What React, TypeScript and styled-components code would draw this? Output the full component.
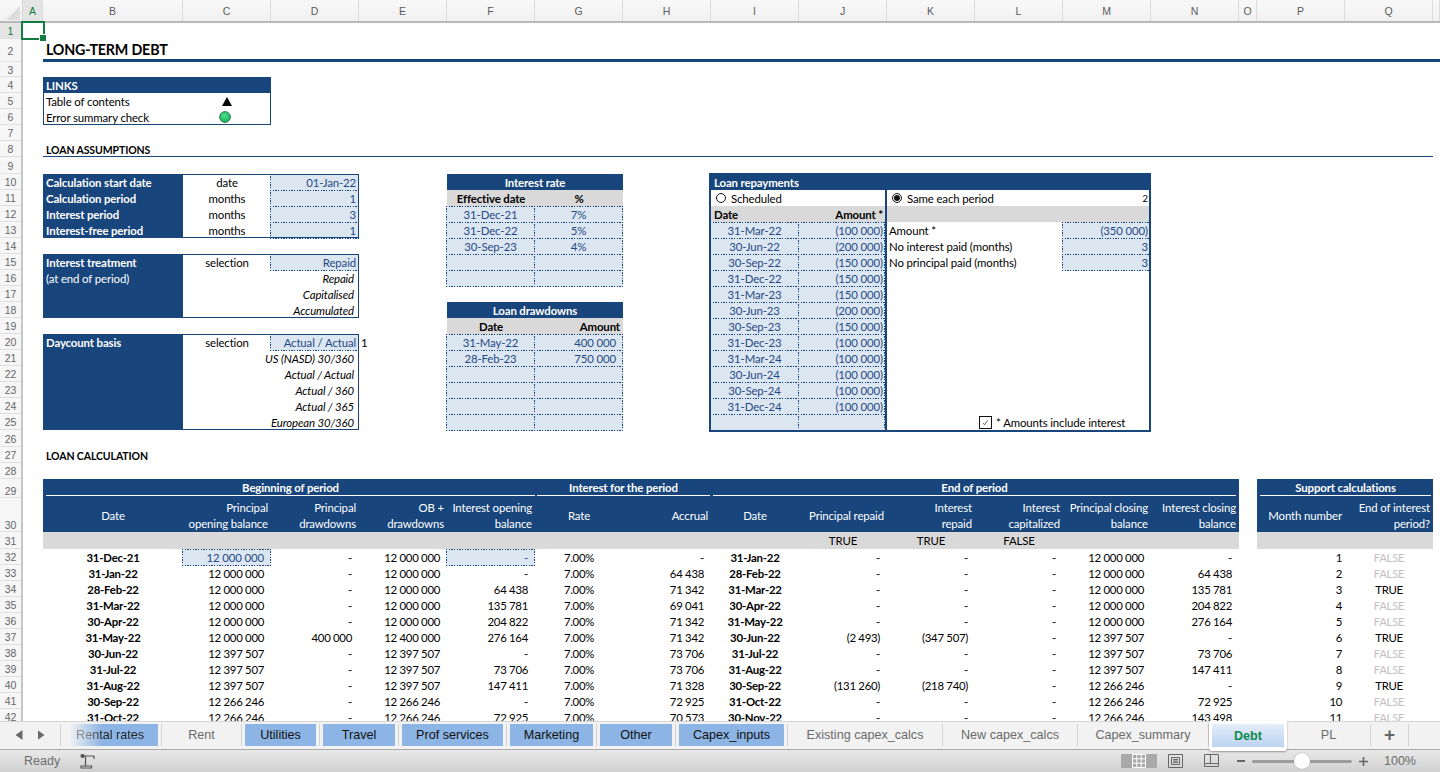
import React from "react";
import styled, { createGlobalStyle, css } from "styled-components";

const NAVY = "#17457c";
const INPUT_BG = "#dce6f1";
const INPUT_TEXT = "#1f4a85";
const GREY = "#d9d9d9";
const CALIBRI = `Lato, "Liberation Sans", sans-serif`;
const UI = `"Liberation Sans", Arial, sans-serif`;

const COLUMN_LETTERS = "ABCDEFGHIJKLMNOPQR".split("");
const COLUMNS = "20px 140px repeat(12, 88px) 18px 88px 88px 1fr";
const ROW_HEIGHTS = [16, 23, 15, 16, 16, 16, 16, 16, 17, ...Array(16).fill(16), 17, 16, 16, 19, 34, 17, ...Array(11).fill(16)];
const ROWS = ROW_HEIGHTS.map((h) => `${h}px`).join(" ");

const GlobalStyle = createGlobalStyle`
  html, body {
    margin: 0;
    padding: 0;
    background: #ffffff;
  }

  * {
    box-sizing: border-box;
  }
`;

const Window = styled.div`
  position: relative;
  display: flex;
  flex-direction: column;
  width: 1440px;
  height: 772px;
  overflow: hidden;
  font-family: ${CALIBRI};
  font-size: 11.4px;
  letter-spacing: -0.12px;
  color: #000000;
`;

const ColumnBar = styled.div`
  display: grid;
  grid-template-columns: 23px ${COLUMNS};
  flex: 0 0 23px;
  background: linear-gradient(#f8f8f8, #f1f1f1);
  border-bottom: 2px solid #b9b9b9;
`;

const Corner = styled.div`
  display: flex;
  align-items: flex-end;
  justify-content: flex-end;
  padding: 0 2px 1px 0;
  border-right: 1px solid #d6d6d6;
`;

const CornerMark = styled.div`
  width: 14px;
  height: 14px;
  background: #dddddd;
  clip-path: polygon(100% 0, 100% 100%, 0 100%);
`;

const ColumnLetter = styled.div<{ $active?: boolean }>`
  display: flex;
  align-items: center;
  justify-content: center;
  border-right: 1px solid #dcdcdc;
  font-family: ${UI};
  font-size: 10.5px;
  letter-spacing: 0;
  color: ${(p) => (p.$active ? "#107c41" : "#5c5c5c")};
  background: ${(p) => (p.$active ? "#e4e4e4" : "transparent")};
`;

const SheetArea = styled.div`
  display: flex;
  flex: 1;
  min-height: 0;
  overflow: hidden;
`;

const RowBar = styled.div`
  display: grid;
  grid-template-rows: ${ROWS};
  flex: 0 0 23px;
  align-self: flex-start;
  background: #f6f6f6;
  border-right: 2px solid #c6c6c6;
`;

const RowNumber = styled.div<{ $active?: boolean; $low?: boolean }>`
  display: flex;
  align-items: ${(p) => (p.$low ? "flex-end" : "center")};
  justify-content: center;
  padding: ${(p) => (p.$low ? "0 0 0" : "1px 0 0")};
  border-bottom: 1px solid #e0e0e0;
  font-family: ${UI};
  font-size: 10.5px;
  letter-spacing: 0;
  color: ${(p) => (p.$active ? "#107c41" : "#666666")};
  background: ${(p) => (p.$active ? "#e4e4e4" : "transparent")};
`;

const Sheet = styled.main`
  display: grid;
  flex: 1;
  align-self: flex-start;
  grid-template-columns: ${COLUMNS};
  grid-template-rows: ${ROWS};
`;

// lies over the headers and cell A1, like the real selection handle
const Selection = styled.div`
  position: absolute;
  left: 21px;
  top: 21px;
  width: 24px;
  height: 19px;
  border: 2px solid #107c41;

  &::after {
    content: "";
    position: absolute;
    right: -4px;
    bottom: -4px;
    width: 6px;
    height: 6px;
    background: #107c41;
    border: 1px solid #ffffff;
  }
`;

const PageTitle = styled.h1`
  grid-column: 2 / -1;
  grid-row: 2;
  display: flex;
  align-items: center;
  margin: 0;
  padding: 0 0 0 3px;
  border-bottom: 3px solid ${NAVY};
  font-size: 14.3px;
  font-weight: 700;
  letter-spacing: -0.2px;
`;

const SectionTitle = styled.h2<{ $row: number; $rule?: boolean }>`
  grid-column: 2 / 18;
  grid-row: ${(p) => p.$row};
  display: flex;
  align-items: center;
  margin: 0;
  padding: ${(p) => (p.$rule ? 2 : 1)}px 0 0 3px;
  font-size: 10.5px;
  font-weight: 700;
  letter-spacing: -0.1px;
  border-bottom: ${(p) => (p.$rule ? `1px solid ${NAVY}` : "none")};
`;

const Block = styled.section<{ $col: string; $row: string; $frame?: boolean; $thick?: boolean }>`
  position: relative;
  grid-column: ${(p) => p.$col};
  grid-row: ${(p) => p.$row};
  display: grid;
  grid-template-columns: subgrid;
  grid-template-rows: subgrid;
  ${(p) =>
    p.$frame &&
    css`
      outline: 1px solid ${NAVY};
      outline-offset: -1px;
    `}
  ${(p) =>
    p.$thick &&
    css`
      &::after {
        content: "";
        position: absolute;
        inset: -1px 0 -2px -2px;
        border: 2px solid ${NAVY};
        pointer-events: none;
      }
    `}
`;

const cellBase = css`
  display: flex;
  align-items: center;
  min-width: 0;
  white-space: nowrap;
`;

const spanCss = css<{ $span?: number; $rows?: number }>`
  grid-column: span ${(p) => p.$span ?? 1};
  grid-row: span ${(p) => p.$rows ?? 1};
`;

type Align = "left" | "center" | "right";
const justify = { left: "flex-start", center: "center", right: "flex-end" };

const NavyCell = styled.div<{ $span?: number; $rows?: number; $align?: Align }>`
  ${cellBase}
  ${spanCss}
  justify-content: ${(p) => justify[p.$align ?? "left"]};
  padding: 0 3px;
  background: ${NAVY};
  color: #ffffff;
  font-weight: 700;
`;

const NavyStack = styled(NavyCell)`
  flex-direction: column;
  align-items: flex-start;
  justify-content: flex-start;
  padding-top: 1px;
`;

const StackLine = styled.div<{ $regular?: boolean }>`
  height: 16px;
  line-height: 16px;
  font-weight: ${(p) => (p.$regular ? 400 : 700)};
`;

const PlainCell = styled.div<{ $span?: number; $rows?: number; $align?: Align; $pad?: number }>`
  ${cellBase}
  ${spanCss}
  justify-content: ${(p) => justify[p.$align ?? "left"]};
  padding: 0 ${(p) => p.$pad ?? 3}px;
`;

const OptionCell = styled(PlainCell)`
  justify-content: flex-end;
  padding-right: 5px;
  font-style: italic;
`;

const FloatingNote = styled.div`
  ${cellBase}
  grid-column: 5;
  grid-row: 20;
  padding-left: 2px;
`;

const GreyCell = styled.div<{ $span?: number; $align?: Align; $pad?: number; $bold?: boolean }>`
  ${cellBase}
  ${spanCss}
  justify-content: ${(p) => justify[p.$align ?? "left"]};
  padding: 0 ${(p) => p.$pad ?? 3}px;
  background: ${GREY};
  font-weight: ${(p) => (p.$bold === false ? 400 : 700)};
`;

const InputCell = styled.div<{ $align?: Align; $pad?: number }>`
  ${cellBase}
  justify-content: ${(p) => justify[p.$align ?? "right"]};
  padding: 0 ${(p) => p.$pad ?? 3}px;
  margin: 0 0 -1px -1px;
  color: ${INPUT_TEXT};
  background-color: ${INPUT_BG};
  background-image: repeating-linear-gradient(90deg, ${NAVY} 0 1.4px, transparent 1.4px 2.67px),
    repeating-linear-gradient(90deg, ${NAVY} 0 1.4px, transparent 1.4px 2.67px),
    repeating-linear-gradient(0deg, ${NAVY} 0 1.4px, transparent 1.4px 2.67px),
    repeating-linear-gradient(0deg, ${NAVY} 0 1.4px, transparent 1.4px 2.67px);
  background-size: 100% 1px, 100% 1px, 1px 100%, 1px 100%;
  background-position: top, bottom, left, right;
  background-repeat: no-repeat;
`;

const Pane = styled.div<{ $col: string; $divider?: boolean }>`
  grid-column: ${(p) => p.$col};
  grid-row: 2 / -1;
  display: grid;
  grid-template-columns: subgrid;
  grid-template-rows: subgrid;
  border-right: ${(p) => (p.$divider ? `2px solid ${NAVY}` : "none")};
`;

const RadioRow = styled(PlainCell)`
  gap: 5px;
  padding-left: 5px;
`;

const Radio = styled.span<{ $on?: boolean }>`
  position: relative;
  flex: 0 0 10px;
  width: 10px;
  height: 10px;
  border: 1px solid #111111;
  border-radius: 50%;
  background: #ffffff;

  &::after {
    content: "";
    display: ${(p) => (p.$on ? "block" : "none")};
    position: absolute;
    inset: 1px;
    border-radius: 50%;
    background: #111111;
  }
`;

const RadioValue = styled.span`
  margin-left: auto;
  font-size: 9.5px;
  letter-spacing: 0;
`;

const CheckNote = styled(PlainCell)`
  gap: 4px;
  padding-left: 92px;
`;

const CheckBox = styled.span`
  display: flex;
  align-items: center;
  justify-content: center;
  flex: 0 0 13px;
  width: 13px;
  height: 13px;
  border: 1px solid #111111;
  background: #ffffff;
`;

const GroupCell = styled(NavyCell)<{ $left: number; $right: number }>`
  align-items: flex-start;
  padding: 0 ${(p) => p.$right}px 0 ${(p) => p.$left}px;
  justify-content: stretch;
`;

const GroupText = styled.div`
  flex: 1;
  height: 17px;
  line-height: 17px;
  text-align: center;
  border-bottom: 1px solid #ffffff;
`;

const ColumnHead = styled.div<{ $align?: Align }>`
  ${cellBase}
  justify-content: ${(p) => justify[p.$align ?? "right"]};
  padding: 2px 3px 0;
  background: ${NAVY};
  color: #ffffff;
  line-height: 16px;
  text-align: ${(p) => p.$align ?? "right"};
  white-space: pre-line;
`;

const DataCell = styled.div<{ $align?: Align; $bold?: boolean; $muted?: boolean; $pad?: number }>`
  ${cellBase}
  justify-content: ${(p) => justify[p.$align ?? "right"]};
  padding: 0 ${(p) => p.$pad ?? (p.$align === "center" ? 0 : 7)}px;
  font-weight: ${(p) => (p.$bold ? 700 : 400)};
  letter-spacing: ${(p) => (p.$bold ? -0.22 : -0.3)}px;
  color: ${(p) => (p.$muted ? "#bfbfbf" : "#000000")};
`;

const TabBar = styled.div`
  position: relative;
  display: flex;
  align-items: stretch;
  flex: 0 0 27px;
  background: #f2f2f2;
  border-top: 1px solid #d4d4d4;
  border-bottom: 1px solid #a9a9a9;
  font-family: ${UI};
  font-size: 12.6px;
  letter-spacing: 0;
`;

const TabNav = styled.div`
  display: flex;
  align-items: center;
  justify-content: center;
  gap: 15px;
  flex: 0 0 61px;
  border-right: 1px solid #d2d2d2;
  margin: 2px 0 3px;
`;

const NavArrow = styled.span<{ $left?: boolean }>`
  width: 7px;
  height: 10px;
  background: #6b6b6b;
  clip-path: ${(p) => (p.$left ? "polygon(100% 0, 100% 100%, 0 50%)" : "polygon(0 0, 100% 50%, 0 100%)")};
`;

const Tab = styled.div<{ $w: number; $kind: "plain" | "blue" | "fade" | "active" }>`
  display: flex;
  align-items: center;
  justify-content: center;
  flex: 0 0 ${(p) => p.$w}px;
  margin: 2px 0 3px;
  border-right: 1px solid #d2d2d2;
  color: #6a6a6a;
  ${(p) =>
    p.$kind === "blue" &&
    css`
      color: #111111;
      background: #8cb4e4;
      background-clip: content-box;
      padding: 0 3px;
    `}
  ${(p) =>
    p.$kind === "fade" &&
    css`
      color: #222222;
      padding: 0 3px 0 1px;
      background: linear-gradient(90deg, #f2f2f2 8%, #8cb4e4 42%) content-box;
    `}
  ${(p) =>
    p.$kind === "active" &&
    css`
      margin: -1px 0 -2px;
      padding: 3px 3px 4px;
      border: none;
      border-radius: 0 0 3px 3px;
      background: linear-gradient(#e4edf9, #bcd3f0) content-box, #ffffff;
      box-shadow: 0 1px 2px rgba(0, 0, 0, 0.35);
      color: #0f8a50;
      font-weight: 700;
      z-index: 1;
    `}
`;

const FadeLabel = styled.span`
  background: linear-gradient(90deg, #8a8a8a 10px, #222222 26px);
  -webkit-background-clip: text;
  background-clip: text;
  color: transparent;
`;

const PlusLabel = styled.span`
  font-size: 19px;
  font-weight: 700;
  color: #666666;
`;

const StatusBar = styled.footer`
  display: flex;
  align-items: center;
  flex: 0 0 22px;
  padding-left: 24px;
  background: linear-gradient(#e9e9e9, #d0d0d0);
  font-family: ${UI};
  font-size: 12.5px;
  letter-spacing: 0;
  color: #6e6e6e;
`;

const MacroIcon = styled.svg`
  margin-left: 20px;
`;

const StatusRight = styled.div`
  display: flex;
  align-items: center;
  align-self: stretch;
  margin-left: auto;
`;

const ViewButton = styled.div<{ $on?: boolean }>`
  display: flex;
  align-items: center;
  justify-content: center;
  width: 36px;
  background: ${(p) => (p.$on ? "#a9a9a9" : "transparent")};
`;

const ZoomSign = styled.svg<{ $gap?: number }>`
  flex: 0 0 auto;
  margin-left: ${(p) => p.$gap ?? 0}px;
`;

const SliderTrack = styled.div`
  position: relative;
  width: 100px;
  height: 3px;
  margin: 0 7px;
  border-radius: 2px;
  background: #9d9d9d;
`;

const SliderThumb = styled.div`
  position: absolute;
  left: 42px;
  top: -7px;
  width: 16px;
  height: 16px;
  border-radius: 50%;
  background: #ffffff;
  box-shadow: 0 0 1px rgba(0, 0, 0, 0.5);
`;

const ZoomLabel = styled.span`
  width: 72px;
  padding-left: 16px;
`;

const LedIcon = styled.svg`
  margin-right: 4px;
`;

const TABS: { label: string; w: number; kind: "plain" | "blue" | "fade" | "active" }[] = [
  { label: "Rental rates", w: 101, kind: "fade" },
  { label: "Rent", w: 80, kind: "plain" },
  { label: "Utilities", w: 78, kind: "blue" },
  { label: "Travel", w: 79, kind: "blue" },
  { label: "Prof services", w: 108, kind: "blue" },
  { label: "Marketing", w: 90, kind: "blue" },
  { label: "Other", w: 79, kind: "blue" },
  { label: "Capex_inputs", w: 112, kind: "blue" },
  { label: "Existing capex_calcs", w: 155, kind: "plain" },
  { label: "New capex_calcs", w: 135, kind: "plain" },
  { label: "Capex_summary", w: 131, kind: "plain" },
  { label: "Debt", w: 78, kind: "active" },
  { label: "PL", w: 84, kind: "plain" },
];

const DRAWDOWNS = [["31-May-22", "400 000"], ["28-Feb-23", "750 000"], ["", ""], ["", ""], ["", ""], ["", ""]];
const RATES = [["31-Dec-21", "7%"], ["31-Dec-22", "5%"], ["30-Sep-23", "4%"], ["", ""], ["", ""]];
const REPAYMENTS = [
  ["31-Mar-22", "(100 000)"],
  ["30-Jun-22", "(200 000)"],
  ["30-Sep-22", "(150 000)"],
  ["31-Dec-22", "(150 000)"],
  ["31-Mar-23", "(150 000)"],
  ["30-Jun-23", "(200 000)"],
  ["30-Sep-23", "(150 000)"],
  ["31-Dec-23", "(100 000)"],
  ["31-Mar-24", "(100 000)"],
  ["30-Jun-24", "(100 000)"],
  ["30-Sep-24", "(100 000)"],
  ["31-Dec-24", "(100 000)"],
  ["", ""],
];

const HEADS: [string, Align][] = [
  ["Date", "center"],
  ["Principal\nopening balance", "right"],
  ["Principal\ndrawdowns", "right"],
  ["OB +\ndrawdowns", "right"],
  ["Interest opening\nbalance", "right"],
  ["Rate", "center"],
  ["Accrual", "right"],
  ["Date", "center"],
  ["Principal repaid", "right"],
  ["Interest\nrepaid", "right"],
  ["Interest\ncapitalized", "right"],
  ["Principal closing\nbalance", "right"],
  ["Interest closing\nbalance", "right"],
];

const A = "12 000 000";
const B = "12 397 507";
const C = "12 266 246";
const D = "-";
const CALC_ROWS = [
  ["31-Dec-21", A, D, A, D, D, "31-Jan-22", D, D, D, A, D],
  ["31-Jan-22", A, D, A, D, "64 438", "28-Feb-22", D, D, D, A, "64 438"],
  ["28-Feb-22", A, D, A, "64 438", "71 342", "31-Mar-22", D, D, D, A, "135 781"],
  ["31-Mar-22", A, D, A, "135 781", "69 041", "30-Apr-22", D, D, D, A, "204 822"],
  ["30-Apr-22", A, D, A, "204 822", "71 342", "31-May-22", D, D, D, A, "276 164"],
  ["31-May-22", A, "400 000", "12 400 000", "276 164", "71 342", "30-Jun-22", "(2 493)", "(347 507)", D, B, D],
  ["30-Jun-22", B, D, B, D, "73 706", "31-Jul-22", D, D, D, B, "73 706"],
  ["31-Jul-22", B, D, B, "73 706", "73 706", "31-Aug-22", D, D, D, B, "147 411"],
  ["31-Aug-22", B, D, B, "147 411", "71 328", "30-Sep-22", "(131 260)", "(218 740)", D, C, D],
  ["30-Sep-22", C, D, C, D, "72 925", "31-Oct-22", D, D, D, C, "72 925"],
  ["31-Oct-22", C, D, C, "72 925", "70 573", "30-Nov-22", D, D, D, C, "143 498"],
];
const INTEREST_ENDS = [false, false, true, false, false, true, false, false, true, false, false];

const CalcRow: React.FC<{ cells: string[]; first: boolean }> = ({ cells, first }) => {
  const [date, opening, drawn, obPlus, interestOpen, accrual, endDate, ...rest] = cells;
  return (
    <>
      <DataCell $align="center" $bold>{date}</DataCell>
      {first ? <InputCell $pad={7}>{opening}</InputCell> : <DataCell>{opening}</DataCell>}
      <DataCell>{drawn}</DataCell>
      <DataCell>{obPlus}</DataCell>
      {first ? <InputCell $pad={7}>{interestOpen}</InputCell> : <DataCell>{interestOpen}</DataCell>}
      <DataCell $align="center">7.00%</DataCell>
      <DataCell>{accrual}</DataCell>
      <DataCell $align="center" $bold>{endDate}</DataCell>
      {rest.map((value, i) => (
        <DataCell key={i}>{value}</DataCell>
      ))}
    </>
  );
};

const ViewIcons = () => (
  <>
    <ViewButton $on>
      <svg width="14" height="14" viewBox="0 0 14 14" fill="none" stroke="#ffffff" strokeWidth="1">
        <path d="M.5.5h13v13H.5zM4.8.5v13M9.2.5v13M.5 4.8h13M.5 9.2h13" />
      </svg>
    </ViewButton>
    <ViewButton>
      <svg width="15" height="14" viewBox="0 0 15 14" fill="none" stroke="#666666" strokeWidth="1">
        <path d="M.5.5h14v13H.5zM3.5 3.5h8v7h-8zM5 5.5h5M5 7h5M5 8.5h5" />
      </svg>
    </ViewButton>
    <ViewButton>
      <svg width="15" height="14" viewBox="0 0 15 14" fill="none" stroke="#666666" strokeWidth="1">
        <path d="M.5 9.5V.5h14v12H.5v-3h6V.5M6.5 9.5h8" />
      </svg>
    </ViewButton>
  </>
);

const App: React.FC = () => (
  <Window>
    <GlobalStyle />
    <ColumnBar>
      <Corner>
        <CornerMark />
      </Corner>
      {COLUMN_LETTERS.map((letter) => (
        <ColumnLetter key={letter} $active={letter === "A"}>
          {letter === "R" ? "" : letter}
        </ColumnLetter>
      ))}
    </ColumnBar>
    <SheetArea>
      <RowBar>
        {ROW_HEIGHTS.map((_, i) => (
          <RowNumber key={i} $active={i === 0} $low={i === 28 || i === 29}>
            {i + 1}
          </RowNumber>
        ))}
      </RowBar>
      <Sheet>
        <PageTitle>LONG-TERM DEBT</PageTitle>

        <Block $col="2 / 4" $row="4 / 7" $frame>
          <NavyCell $span={2}>LINKS</NavyCell>
          <PlainCell>Table of contents</PlainCell>
          <PlainCell $align="center">
            <svg width="10" height="9" viewBox="0 0 10 9">
              <path d="M5 0l5 9H0z" fill="#000000" />
            </svg>
          </PlainCell>
          <PlainCell>Error summary check</PlainCell>
          <PlainCell $align="center">
            <LedIcon width="12" height="12" viewBox="0 0 12 12">
              <defs>
                <radialGradient id="led" cx="45%" cy="35%" r="70%">
                  <stop offset="0" stopColor="#4fdc8c" />
                  <stop offset="1" stopColor="#0fb45a" />
                </radialGradient>
              </defs>
              <circle cx="6" cy="6" r="5.4" fill="url(#led)" stroke="#1c5a3a" strokeWidth="0.8" />
            </LedIcon>
          </PlainCell>
        </Block>

        <SectionTitle $row={8} $rule>LOAN ASSUMPTIONS</SectionTitle>

        <Block $col="2 / 5" $row="10 / 14" $frame>
          <NavyCell>Calculation start date</NavyCell>
          <PlainCell $align="center">date</PlainCell>
          <InputCell>01-Jan-22</InputCell>
          <NavyCell>Calculation period</NavyCell>
          <PlainCell $align="center">months</PlainCell>
          <InputCell>1</InputCell>
          <NavyCell>Interest period</NavyCell>
          <PlainCell $align="center">months</PlainCell>
          <InputCell>3</InputCell>
          <NavyCell>Interest-free period</NavyCell>
          <PlainCell $align="center">months</PlainCell>
          <InputCell>1</InputCell>
        </Block>

        <Block $col="2 / 5" $row="15 / 19" $frame>
          <NavyStack $rows={4}>
            <StackLine>Interest treatment</StackLine>
            <StackLine $regular>(at end of period)</StackLine>
          </NavyStack>
          <PlainCell $align="center">selection</PlainCell>
          <InputCell>Repaid</InputCell>
          <PlainCell />
          <OptionCell>Repaid</OptionCell>
          <PlainCell />
          <OptionCell>Capitalised</OptionCell>
          <PlainCell />
          <OptionCell>Accumulated</OptionCell>
        </Block>

        <Block $col="2 / 5" $row="20 / 26" $frame>
          <NavyStack $rows={6}>
            <StackLine>Daycount basis</StackLine>
          </NavyStack>
          <PlainCell $align="center">selection</PlainCell>
          <InputCell>Actual / Actual</InputCell>
          {["US (NASD) 30/360", "Actual / Actual", "Actual / 360", "Actual / 365", "European 30/360"].map((label) => (
            <React.Fragment key={label}>
              <PlainCell />
              <OptionCell>{label}</OptionCell>
            </React.Fragment>
          ))}
        </Block>
        <FloatingNote>1</FloatingNote>

        <Block $col="6 / 8" $row="10 / 17">
          <NavyCell $span={2} $align="center">Interest rate</NavyCell>
          <GreyCell $align="center">Effective date</GreyCell>
          <GreyCell $align="center">%</GreyCell>
          {RATES.map(([date, rate], i) => (
            <React.Fragment key={i}>
              <InputCell $align="center">{date}</InputCell>
              <InputCell $align="center">{rate}</InputCell>
            </React.Fragment>
          ))}
        </Block>

        <Block $col="6 / 8" $row="18 / 26">
          <NavyCell $span={2} $align="center">Loan drawdowns</NavyCell>
          <GreyCell $align="center">Date</GreyCell>
          <GreyCell $align="right">Amount</GreyCell>
          {DRAWDOWNS.map(([date, amount], i) => (
            <React.Fragment key={i}>
              <InputCell $align="center">{date}</InputCell>
              <InputCell $pad={7}>{amount}</InputCell>
            </React.Fragment>
          ))}
        </Block>

        <Block $col="9 / 14" $row="10 / 26" $thick>
          <NavyCell $span={5}>Loan repayments</NavyCell>
          <Pane $col="1 / 3" $divider>
            <RadioRow $span={2}>
              <Radio />
              Scheduled
            </RadioRow>
            <GreyCell>Date</GreyCell>
            <GreyCell $align="right" $pad={2}>Amount *</GreyCell>
            {REPAYMENTS.map(([date, amount], i) => (
              <React.Fragment key={i}>
                <InputCell $align="center">{date}</InputCell>
                <InputCell $pad={2}>{amount}</InputCell>
              </React.Fragment>
            ))}
          </Pane>
          <Pane $col="3 / 6">
            <RadioRow $span={3}>
              <Radio $on />
              Same each period
              <RadioValue>2</RadioValue>
            </RadioRow>
            <GreyCell $span={3} />
            <PlainCell $span={2} $pad={2}>Amount *</PlainCell>
            <InputCell $pad={3}>(350 000)</InputCell>
            <PlainCell $span={2} $pad={2}>No interest paid (months)</PlainCell>
            <InputCell $pad={3}>3</InputCell>
            <PlainCell $span={2} $pad={2}>No principal paid (months)</PlainCell>
            <InputCell $pad={3}>3</InputCell>
            <PlainCell $span={3} $rows={9} />
            <CheckNote $span={3}>
              <CheckBox>
                <svg width="7" height="7" viewBox="0 0 7 7" fill="none" stroke="#444444" strokeWidth="0.8">
                  <path d="M1.2 4l1.4 1.8L5.6 1.4" />
                </svg>
              </CheckBox>
              * Amounts include interest
            </CheckNote>
          </Pane>
        </Block>

        <SectionTitle $row={27}>LOAN CALCULATION</SectionTitle>

        <Block $col="2 / 15" $row="29 / 43">
          <GroupCell $span={5} $left={3} $right={0}>
            <GroupText>Beginning of period</GroupText>
          </GroupCell>
          <GroupCell $span={2} $left={2} $right={1}>
            <GroupText>Interest for the period</GroupText>
          </GroupCell>
          <GroupCell $span={6} $left={2} $right={3}>
            <GroupText>End of period</GroupText>
          </GroupCell>
          {HEADS.map(([label, align], i) => (
            <ColumnHead key={i} $align={align}>{label}</ColumnHead>
          ))}
          <GreyCell $span={8} />
          <GreyCell $align="center" $bold={false}>TRUE</GreyCell>
          <GreyCell $align="center" $bold={false}>TRUE</GreyCell>
          <GreyCell $align="center" $bold={false}>FALSE</GreyCell>
          <GreyCell $span={2} />
          {CALC_ROWS.map((cells, i) => (
            <CalcRow key={i} cells={cells} first={i === 0} />
          ))}
        </Block>

        <Block $col="16 / 18" $row="29 / 43">
          <GroupCell $span={2} $left={3} $right={2}>
            <GroupText>Support calculations</GroupText>
          </GroupCell>
          <ColumnHead>Month number</ColumnHead>
          <ColumnHead>{"End of interest\nperiod?"}</ColumnHead>
          <GreyCell $span={2} />
          {INTEREST_ENDS.map((isEnd, i) => (
            <React.Fragment key={i}>
              <DataCell $pad={3}>{i + 1}</DataCell>
              <DataCell $align="center" $muted={!isEnd}>{isEnd ? "TRUE" : "FALSE"}</DataCell>
            </React.Fragment>
          ))}
        </Block>
      </Sheet>
    </SheetArea>
    <Selection />

    <TabBar>
      <TabNav>
        <NavArrow $left />
        <NavArrow />
      </TabNav>
      {TABS.map((tab) => (
        <Tab key={tab.label} $w={tab.w} $kind={tab.kind}>
          {tab.kind === "fade" ? <FadeLabel>{tab.label}</FadeLabel> : tab.label}
        </Tab>
      ))}
      <Tab $w={38} $kind="plain">
        <PlusLabel>+</PlusLabel>
      </Tab>
    </TabBar>

    <StatusBar>
      Ready
      <MacroIcon width="16" height="15" viewBox="0 0 16 15" fill="none" stroke="#555555" strokeWidth="1.2">
        <circle cx="2.5" cy="2" r="1.5" fill="#555555" />
        <path d="M4 2h10v3M5.5 2v10M1 12h10.5v2H1z" />
      </MacroIcon>
      <StatusRight>
        <ViewIcons />
        <ZoomSign $gap={8} width="8" height="8" viewBox="0 0 8 8">
          <path d="M0 4h8" stroke="#666666" strokeWidth="2" />
        </ZoomSign>
        <SliderTrack>
          <SliderThumb />
        </SliderTrack>
        <ZoomSign width="9" height="9" viewBox="0 0 9 9">
          <path d="M0 4.5h9M4.5 0v9" stroke="#666666" strokeWidth="1.6" />
        </ZoomSign>
        <ZoomLabel>100%</ZoomLabel>
      </StatusRight>
    </StatusBar>
  </Window>
);

export default App;
